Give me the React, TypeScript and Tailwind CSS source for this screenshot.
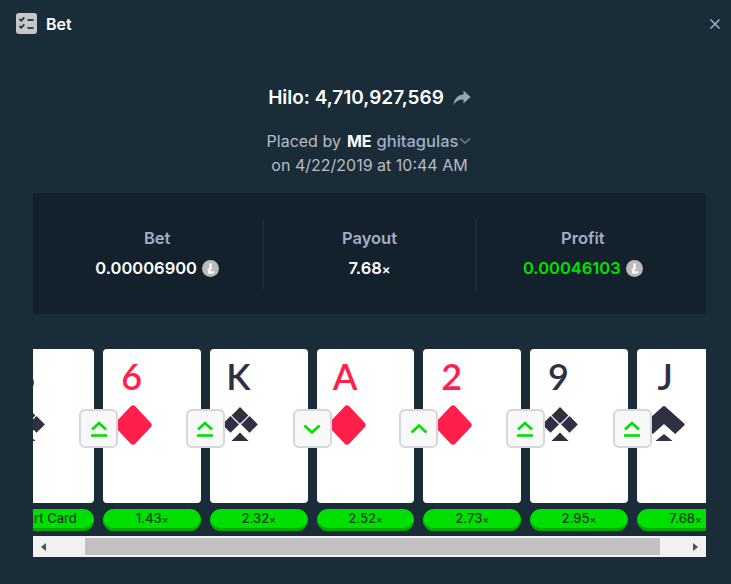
import type { ReactNode } from "react";

const INK = "#2f3042";
const RED = "#ff1f4b";

type Suit = "diamond" | "club" | "spade";
type Move = "same" | "up" | "down";

const cards: { rank: string; suit: Suit; red?: boolean; move?: Move; label: string; times?: boolean }[] = [
  { rank: "8", suit: "club", label: "Start Card" },
  { rank: "6", suit: "diamond", red: true, move: "same", label: "1.43", times: true },
  { rank: "K", suit: "club", move: "same", label: "2.32", times: true },
  { rank: "A", suit: "diamond", red: true, move: "down", label: "2.52", times: true },
  { rank: "2", suit: "diamond", red: true, move: "up", label: "2.73", times: true },
  { rank: "9", suit: "club", move: "same", label: "2.95", times: true },
  { rank: "J", suit: "spade", move: "same", label: "7.68", times: true },
];

function SuitIcon({ suit }: { suit: Suit }) {
  if (suit === "diamond") {
    return (
      <svg viewBox="0 0 38 40" className="h-[40px] w-[38px]" fill={RED}>
        <path d="M16.500 1.500a3.500 3.500 0 0 1 5 0l15 16a3.600 3.600 0 0 1 0 5l-15 16a3.500 3.500 0 0 1-5 0l-15-16a3.600 3.600 0 0 1 0-5z" />
      </svg>
    );
  }
  if (suit === "club") {
    return (
      <svg viewBox="0 0 38 40" className="h-[40px] w-[38px]" fill={INK}>
        <path d="M19 2l8.400 8.400-8.400 8.400-8.400-8.400z" />
        <path d="M9.500 11l8.400 8.400-8.400 8.400-8.400-8.400z" />
        <path d="M28.500 11l8.400 8.400-8.400 8.400-8.400-8.400z" />
        <path d="M19 27.500l8.500 8.500h-17z" />
      </svg>
    );
  }
  return (
    <svg viewBox="0 0 42 40" className="mr-[6px] h-[40px] w-[42px]" fill={INK}>
      <path d="M19.800 1.500a1.700 1.700 0 0 1 2.400 0l19 17a1.500 1.500 0 0 1 0 2l-9 8.500-11.200-10-11.200 10-9-8.500a1.500 1.500 0 0 1 0-2z" />
      <path d="M21 29l8.500 7h-17z" />
    </svg>
  );
}

function MoveIcon({ move }: { move: Move }) {
  return (
    <svg viewBox="0 0 18 18" className="h-[18px] w-[18px]" fill="none" stroke="#00e000" strokeWidth="2.600">
      {move === "same" && (
        <>
          <path d="M2 9.500l7-6.500 7 6.500" />
          <path d="M1 15.500h16" />
        </>
      )}
      {move === "up" && <path d="M1.500 12.500l7.500-7 7.500 7" />}
      {move === "down" && <path d="M1.500 5.500l7.500 7 7.500-7" />}
    </svg>
  );
}

function LtcIcon() {
  return (
    <span className="flex h-[17px] w-[17px] items-center justify-center rounded-full bg-[#bdb9b8]">
      <svg viewBox="0 0 17 17" className="h-[17px] w-[17px]" fill="#fff">
        <path d="M7.500 3.500h2.600l-1 4.400 1.700-.6-.4 1.400-1.700.6-.5 2h4.100l-.6 2.200H5.600l.9-3.400-1.300.5.3-1.300 1.400-.5z" />
      </svg>
    </span>
  );
}

function Stat({ label, children }: { label: string; children: ReactNode }) {
  return (
    <div className="flex h-[70px] flex-col items-center gap-[10px] border-r-2 border-[#1a2c38] pt-[9px] last:border-r-0">
      <span className="text-[16.500px] leading-[20px] font-semibold text-[#a3aec6]">{label}</span>
      {children}
    </div>
  );
}

export default function App() {
  return (
    <div
      className="flex h-[584px] w-[731px] flex-col overflow-hidden bg-[#1a2c38] text-white"
      style={{ fontFamily: "Inter, 'Open Sans', sans-serif" }}
    >
      {/* Header */}
      <div className="flex h-[47px] shrink-0 items-center justify-between pr-[10px] pl-[16px]">
        <div className="flex items-center gap-[9px]">
          <span className="flex h-[21px] w-[21px] items-center justify-center rounded-[3px] bg-[#c6c6c6]">
            <svg viewBox="0 0 21 21" className="h-[21px] w-[21px]" fill="none" stroke="#24323f" strokeWidth="1.800">
              <path d="M3.500 6l1.800 1.800 3-3.400" />
              <path d="M3.500 13l1.800 1.800 3-3.400" />
              <path d="M11.500 7h6" />
              <path d="M11.500 15h6" />
            </svg>
          </span>
          <span className="text-[16px] font-semibold">Bet</span>
        </div>
        <svg viewBox="0 0 12 12" className="h-[12px] w-[12px]" fill="none" stroke="#b1bad3" strokeWidth="1.300">
          <path d="M1.500 1.500l9 9M10.500 1.500l-9 9" />
        </svg>
      </div>

      <div className="flex flex-col pr-[25px] pl-[33px]">
        <div className="mt-[39px] flex items-center justify-center gap-[9px]">
          <span className="text-[19px] leading-[24px] font-semibold">Hilo: 4,710,927,569</span>
          <svg viewBox="0 0 18 16" className="h-[16px] w-[18px]" fill="#98a5b9">
            <path d="M10.500 0.500l7 6.500-7 6.500v-4c-4.500 0-7.500 1.500-10 5.500 0.500-6 4-10 10-10.500z" />
          </svg>
        </div>
        <div className="mt-[19px] flex flex-col items-center text-[16px] leading-[24px] text-[#b7bcc4]">
          <div className="flex items-center">
            <span>Placed by</span>
            <span className="ml-[6px] font-bold text-white">ME</span>
            <span className="ml-[5px] text-[16.500px] font-medium text-[#a3aec6]">ghitagulas</span>
            <svg viewBox="0 0 14 8" className="h-[8px] w-[14px]" fill="none" stroke="#5b6b7d" strokeWidth="2">
              <path d="M2 1.500l5 4.500 5-4.500" />
            </svg>
          </div>
          <div>on 4/22/2019 at 10:44 AM</div>
        </div>

        {/* Summary */}
        <div className="mt-[16px] grid h-[121px] shrink-0 grid-cols-3 rounded-[4px] bg-[#12212c] pt-[26px] pr-[17px] pl-[19px]">
          <Stat label="Bet">
            <div className="flex items-center gap-[5px] text-[16.500px] leading-[20px] font-semibold">
              0.00006900 <LtcIcon />
            </div>
          </Stat>
          <Stat label="Payout">
            <div className="text-[16.500px] leading-[20px] font-semibold">
              7.68<span className="text-[13px]">×</span>
            </div>
          </Stat>
          <Stat label="Profit">
            <div className="flex items-center gap-[5px] text-[16.500px] leading-[20px] font-semibold text-[#00e000]">
              0.00046103 <LtcIcon />
            </div>
          </Stat>
        </div>

        {/* Cards, scrolled a little to the right */}
        <div className="mt-[35px] overflow-hidden">
          <div className="ml-[-36.500px] flex w-max gap-[9px]">
            {cards.map((card) => (
              <div key={card.label} className="flex w-[97.700px] flex-col gap-[6px]">
                <div className="relative h-[154px] rounded-[4px] bg-white">
                  <div
                    className="flex w-[60px] flex-col items-center pt-[5px] text-[36px] leading-[44px] font-semibold"
                    style={{ color: card.red ? RED : INK, fontFamily: "Lato, sans-serif" }}
                  >
                    <span className="mr-[3px]">{card.rank}</span>
                    <span className="mt-[7px] block">
                      <SuitIcon suit={card.suit} />
                    </span>
                  </div>
                  {card.move && (
                    <span className="absolute top-[60px] left-[-24px] flex h-[39px] w-[39px] items-center justify-center rounded-[6px] border-2 border-[#d5d7dc] bg-[#f8f8f8]">
                      <MoveIcon move={card.move} />
                    </span>
                  )}
                </div>
                <div className="flex h-[22px] items-center justify-center rounded-full bg-[#00e000] pb-[2px] text-[13px] font-medium text-[#0c3f1a] shadow-[inset_0_-3px_0_#00a800]">
                  {card.label}
                  {card.times && <span className="text-[10px]">×</span>}
                </div>
              </div>
            ))}
          </div>
        </div>

        {/* Scrollbar */}
        <div className="mt-[5px] flex h-[21px] shrink-0 items-center justify-between bg-[#f1f1f1] px-[8px]">
          <span className="h-0 w-0 border-y-[4.500px] border-r-[5px] border-y-transparent border-r-[#505050]" />
          <span className="mr-[33px] ml-[39px] h-[17px] flex-1 bg-[#c1c1c1]" />
          <span className="h-0 w-0 border-y-[4.500px] border-l-[5px] border-y-transparent border-l-[#505050]" />
        </div>
      </div>
    </div>
  );
}
